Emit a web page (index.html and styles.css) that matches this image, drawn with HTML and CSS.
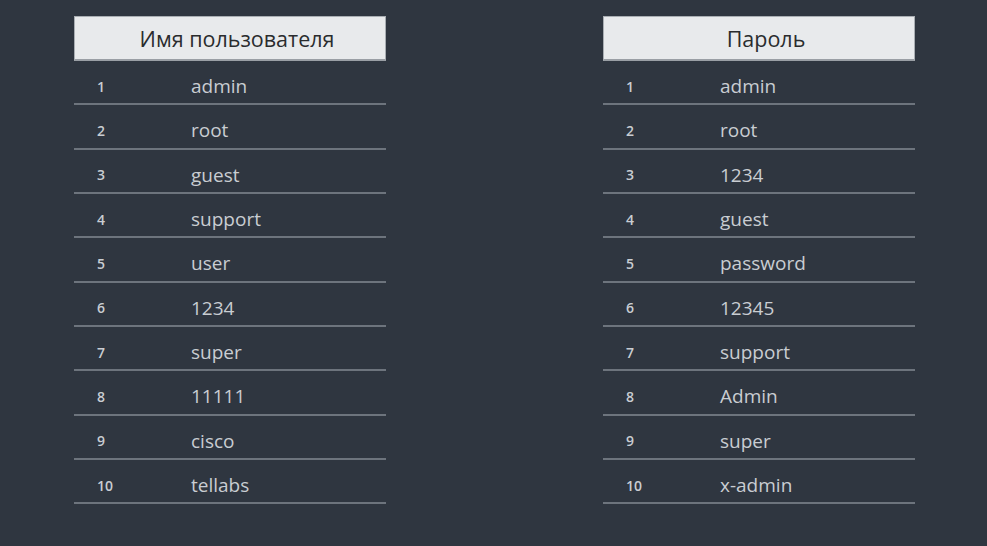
FILE: index.html
```html
<!DOCTYPE html>
<html lang="ru">
<head>
<meta charset="utf-8">
<link rel="stylesheet" href="styles.css">
</head>
<body>
<div class="page">
  <div class="table">
    <div class="head">Имя пользователя</div>
    <div class="row"><span class="num">1</span><span class="val">admin</span></div>
    <div class="row"><span class="num">2</span><span class="val">root</span></div>
    <div class="row"><span class="num">3</span><span class="val">guest</span></div>
    <div class="row"><span class="num">4</span><span class="val">support</span></div>
    <div class="row"><span class="num">5</span><span class="val">user</span></div>
    <div class="row"><span class="num">6</span><span class="val">1234</span></div>
    <div class="row"><span class="num">7</span><span class="val">super</span></div>
    <div class="row"><span class="num">8</span><span class="val">11111</span></div>
    <div class="row"><span class="num">9</span><span class="val">cisco</span></div>
    <div class="row"><span class="num">10</span><span class="val">tellabs</span></div>
  </div>
  <div class="table">
    <div class="head">Пароль</div>
    <div class="row"><span class="num">1</span><span class="val">admin</span></div>
    <div class="row"><span class="num">2</span><span class="val">root</span></div>
    <div class="row"><span class="num">3</span><span class="val">1234</span></div>
    <div class="row"><span class="num">4</span><span class="val">guest</span></div>
    <div class="row"><span class="num">5</span><span class="val">password</span></div>
    <div class="row"><span class="num">6</span><span class="val">12345</span></div>
    <div class="row"><span class="num">7</span><span class="val">support</span></div>
    <div class="row"><span class="num">8</span><span class="val">Admin</span></div>
    <div class="row"><span class="num">9</span><span class="val">super</span></div>
    <div class="row"><span class="num">10</span><span class="val">x-admin</span></div>
  </div>
</div>
</body>
</html>
```

FILE: styles.css
```css
html, body {
  margin: 0;
  padding: 0;
  background: #2f3640;
  height: 100%;
}
.page {
  display: flex;
  gap: 217px;
  padding: 16px 0 0 74px;
  font-family: "Open Sans", "Liberation Sans", sans-serif;
}
.table {
  width: 312px;
  display: flex;
  flex-direction: column;
}
.head {
  background: #e8eaec;
  border: 1px solid #a9aeb3;
  border-bottom: 2px solid #9a9fa5;
  box-sizing: border-box;
  height: 45px;
  display: flex;
  align-items: center;
  justify-content: center;
  padding-left: 14px;
  font-size: 21.5px;
  color: #2a2c2e;
}
.row {
  height: 44.33px;
  box-sizing: border-box;
  border-bottom: 2px solid #6d747d;
  display: flex;
  align-items: center;
  padding-top: 8px;
  color: #c9cdd2;
}
.num {
  width: 117px;
  padding-left: 23px;
  box-sizing: border-box;
  font-size: 14px;
  font-weight: 600;
}
.val {
  font-size: 19px;
}
```
